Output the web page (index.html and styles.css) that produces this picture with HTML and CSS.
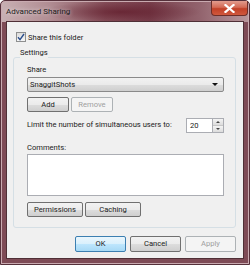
FILE: index.html
```html
<!DOCTYPE html>
<html>
<head>
<meta charset="utf-8">
<link rel="stylesheet" href="styles.css">
</head>
<body>
<div class="window">
  <div class="titlebar">
    <span class="title">Advanced Sharing</span>
    <div class="close">
      <svg width="11" height="9" viewBox="0 0 11 9"><path d="M1.5 1 L9.5 8 M9.5 1 L1.5 8" stroke="#fff" stroke-width="2.2" stroke-linecap="square"/></svg>
    </div>
  </div>
  <div class="client">
    <div class="check-row">
      <span class="checkbox"><svg width="8" height="8" viewBox="0 0 8 8"><path d="M1 4.2 L3 6.6 L7 1" fill="none" stroke="#2a4d8c" stroke-width="1.4"/></svg></span>
      <span>Share this folder</span>
    </div>
    <fieldset class="group">
      <legend>Settings</legend>
      <div class="label share-label">Share</div>
      <div class="combo"><span>SnaggitShots</span><span class="arrow"></span></div>
      <div class="btn-row">
        <div class="btn">Add</div>
        <div class="btn disabled">Remove</div>
      </div>
      <div class="limit-row">
        <span class="limit-text">Limit the number of simultaneous users to:</span>
        <div class="spin">
          <div class="spin-input">20</div>
          <div class="spin-btns">
            <div class="spin-btn"><span class="up"></span></div>
            <div class="spin-btn"><span class="down"></span></div>
          </div>
        </div>
      </div>
      <div class="label comments-label">Comments:</div>
      <div class="textarea"></div>
      <div class="btn-row btn-row2">
        <div class="btn wide">Permissions</div>
        <div class="btn wide">Caching</div>
      </div>
    </fieldset>
    <div class="dialog-buttons">
      <div class="btn dlg default">OK</div>
      <div class="btn dlg">Cancel</div>
      <div class="btn dlg disabled">Apply</div>
    </div>
  </div>
</div>
</body>
</html>
```
FILE: styles.css
```css
* { box-sizing: border-box; }
html, body { margin: 0; padding: 0; }
body {
  width: 250px;
  height: 265px;
  font-family: Roboto, "Noto Sans", sans-serif;
  font-size: 7.6px;
  color: #222;
  background: #fff;
  overflow: hidden;
  white-space: nowrap;
}
.window {
  width: 250px;
  height: 265px;
  display: flex;
  flex-direction: column;
  border: 1px solid #55303a;
  border-radius: 5px 5px 0 0;
  background-color: #7e4b56;
  background-image:
    radial-gradient(ellipse 80px 11px at 120px 11px, rgba(95,25,40,0.7), rgba(95,25,40,0) 100%),
    linear-gradient(to right, #c8b0b3 0%, #b08c92 20%, #86505b 42%, #783f4c 60%, #92636d 80%, #b8979c 100%);
  background-size: 100% 100%, 100% 21px;
  background-repeat: no-repeat;
  padding: 0 5px 5px 5px;
  box-shadow: inset 0 0 0 1px #c9aab0;
}
.titlebar {
  height: 20px;
  display: flex;
  align-items: flex-start;
  justify-content: space-between;
}
.title {
  margin-top: 6px;
  color: #1c1c1c;
  font-size: 8px;
  line-height: 10px;
  text-shadow: 0 0 4px rgba(255,255,255,0.8);
}
.close {
  width: 37px;
  height: 15px;
  margin-right: -4px;
  border: 1px solid #6e2e28;
  border-top: none;
  border-radius: 0 0 4px 4px;
  background: linear-gradient(#e29c8e 0%, #d46a55 45%, #c24027 55%, #d0583d 100%);
  display: flex;
  align-items: center;
  justify-content: center;
}
.client {
  flex: 1;
  background: #f0f0f0;
  border: 1px solid #4f2f36;
  display: flex;
  flex-direction: column;
  padding: 0 7px 0 6px;
}
.check-row {
  display: flex;
  align-items: center;
  margin-top: 10px;
  margin-left: 3px;
  gap: 2px;
  height: 10px;
}
.checkbox {
  width: 10px;
  height: 10px;
  border: 1px solid #8e8f8f;
  background: linear-gradient(#dcdcdc, #f6f6f6);
  display: flex;
  align-items: center;
  justify-content: center;
}
.group {
  margin: 7px 0 0 0;
  padding: 0 11px 10px 13px;
  border: 1px solid #d5dfe5;
  border-radius: 3px;
  min-width: 0;
}
.group legend {
  padding: 0 0 8px 0;
  margin-left: -7px;
  line-height: 8px;
  height: 16px;
}
.label { line-height: 10px; }
.combo {
  margin-top: 2px;
  height: 15px;
  border: 1px solid #8a8a8a;
  border-radius: 2px;
  background: linear-gradient(#f2f2f2 0%, #ebebeb 50%, #dddddd 51%, #cfcfcf 100%);
  display: flex;
  align-items: center;
  justify-content: space-between;
  padding: 0 5px 0 2px;
}
.arrow {
  width: 0; height: 0;
  border-left: 3px solid transparent;
  border-right: 3px solid transparent;
  border-top: 3px solid #111;
}
.btn-row {
  display: flex;
  gap: 2px;
  margin-top: 5px;
}
.btn {
  height: 15px;
  width: 42px;
  border: 1px solid #707070;
  border-radius: 2px;
  background: linear-gradient(#f2f2f2 0%, #ebebeb 50%, #dddddd 51%, #cfcfcf 100%);
  display: flex;
  align-items: center;
  justify-content: center;
  line-height: 10px;
}
.btn.disabled {
  border-color: #adb2b5;
  background: #f4f4f4;
  color: #a0a0a0;
}
.btn.wide { width: 56px; }
.limit-row {
  display: flex;
  justify-content: space-between;
  align-items: center;
  margin-top: 6px;
  height: 15px;
}
.limit-text { margin-top: -2px; }
.spin { display: flex; height: 15px; }
.spin-input {
  width: 26px;
  height: 15px;
  border: 1px solid #abadb3;
  border-right: none;
  background: #fff;
  padding-left: 3px;
  line-height: 13px;
}
.spin-btns {
  width: 12px;
  display: flex;
  flex-direction: column;
  border: 1px solid #abadb3;
}
.spin-btn {
  flex: 1;
  background: linear-gradient(#f4f4f4, #dcdcdc);
  display: flex;
  align-items: center;
  justify-content: center;
  border-bottom: 1px solid #c7c7c7;
}
.spin-btn:last-child { border-bottom: none; }
.up { width: 0; height: 0; border-left: 2px solid transparent; border-right: 2px solid transparent; border-bottom: 2px solid #444; }
.down { width: 0; height: 0; border-left: 2px solid transparent; border-right: 2px solid transparent; border-top: 2px solid #444; }
.comments-label { margin-top: 10px; }
.textarea {
  margin-top: 1px;
  height: 42px;
  border: 1px solid #abadb3;
  background: #fff;
}
.btn-row2 { margin-top: 6px; }
.dialog-buttons {
  display: flex;
  justify-content: flex-end;
  gap: 4px;
  margin-top: 8px;
}
.btn.dlg { width: 51px; height: 16px; }
.btn.default {
  border-color: #3c7fb1;
  background: linear-gradient(#eaf6fd 0%, #d9f0fc 50%, #bee6fd 51%, #a7d9f5 100%);
}
```
